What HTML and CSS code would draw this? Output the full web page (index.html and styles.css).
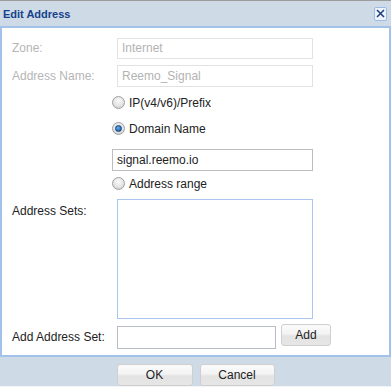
FILE: index.html
```html
<!DOCTYPE html>
<html>
<head>
    <link rel="stylesheet" href="styles.css">
</head>
<body>
    <div class="dialog">
        <!-- title -->
        <div class="title-bar">
            <span class="title">Edit Address</span>
            <span class="close-btn">
                <svg width="9" height="9" viewBox="0 0 9 9">
                    <path d="M1 1 L8 8 M8 1 L1 8" stroke="#1e3c7a" stroke-width="1.5" fill="none"/>
                </svg>
            </span>
        </div>

        <!-- form -->
        <div class="content">
            <div class="form-row">
                <label class="field-label disabled">Zone:</label>
                <input class="text-input" type="text" value="Internet" disabled>
            </div>
            <div class="form-row row-name">
                <label class="field-label disabled">Address Name:</label>
                <input class="text-input tall" type="text" value="Reemo_Signal" disabled>
            </div>

            <label class="radio-row row-ip">
                <input type="radio" name="kind">
                <span>IP(v4/v6)/Prefix</span>
            </label>
            <label class="radio-row row-domain">
                <input type="radio" name="kind" checked>
                <span>Domain Name</span>
            </label>
            <div class="domain-box">
                <input class="text-input active" type="text" value="signal.reemo.io">
            </div>
            <label class="radio-row row-range">
                <input type="radio" name="kind">
                <span>Address range</span>
            </label>

            <div class="form-row row-sets">
                <label class="field-label top">Address Sets:</label>
                <textarea class="sets-list"></textarea>
            </div>
            <div class="form-row row-add">
                <label class="field-label">Add Address Set:</label>
                <input class="text-input add-input" type="text">
                <button class="btn add-btn">Add</button>
            </div>
        </div>

        <!-- buttons -->
        <div class="footer">
            <button class="btn ok-btn">OK</button>
            <button class="btn cancel-btn">Cancel</button>
        </div>
    </div>
</body>
</html>
```

FILE: styles.css
```css
body {
    margin: 0;
    width: 391px;
    height: 387px;
    overflow: hidden;
    font-family: "Liberation Sans", Arial, sans-serif;
    font-size: 12px;
    color: #222;
    background: #fff;
}

.dialog {
    height: 387px;
    box-sizing: border-box;
    border-top: 1px solid #9c9c9c;
    background: #cfdae7;
    display: flex;
    flex-direction: column;
}

.title-bar {
    height: 25px;
    display: flex;
    align-items: center;
    justify-content: space-between;
    padding: 0 4px 0 3px;
}

.title {
    font-size: 11px;
    font-weight: bold;
    color: #15428b;
    margin-top: 1px;
}

.close-btn {
    width: 11px;
    height: 12px;
    border: 1px solid #99bbe8;
    border-radius: 2px;
    background: #eef3fa;
    display: flex;
    align-items: center;
    justify-content: center;
    margin-top: 1px;
}

.content {
    height: 322px;
    background: #fff;
    border: 2px solid #a3c2ea;
    padding: 10px 0 0 10px;
}

.form-row {
    display: flex;
    align-items: center;
}

.field-label {
    width: 105px;
    flex-shrink: 0;
}

.field-label.disabled {
    color: #b5b5b5;
}

.field-label.top {
    align-self: flex-start;
    padding-top: 5px;
}

.text-input {
    box-sizing: border-box;
    width: 196px;
    height: 21px;
    margin: 0;
    padding: 0 4px;
    border: 1px solid #c4c4c4;
    background: #fff;
    font-family: "Liberation Sans", Arial, sans-serif;
    font-size: 12px;
    color: #222;
    outline: none;
}

.text-input:disabled {
    border-color: #e2e2e2;
    color: #b3b3b3;
}

.text-input.tall {
    height: 22px;
}

.row-name {
    margin-top: 6px;
}

.radio-row {
    display: flex;
    align-items: center;
    gap: 4px;
    height: 16px;
    margin-left: 100px;
}

.radio-row input {
    appearance: none;
    -webkit-appearance: none;
    width: 13px;
    height: 13px;
    margin: 0;
    border: 1px solid #a0a0a0;
    border-radius: 50%;
    background: radial-gradient(circle at 50% 35%, #fafafa 0, #e4e4e4 55%, #c4c4c4 100%);
    box-sizing: border-box;
    position: relative;
}

.radio-row input:checked::after {
    content: "";
    position: absolute;
    left: 2px;
    top: 2px;
    width: 5px;
    height: 5px;
    border-radius: 50%;
    border: 1px solid #173e6e;
    background: radial-gradient(circle at 40% 35%, #6fb0ee 0, #1f6cc0 70%);
}

.row-ip {
    margin-top: 8px;
}

.row-domain {
    margin-top: 10px;
}

.domain-box {
    margin: 12px 0 0 100px;
}

.domain-box .text-input {
    width: 201px;
    height: 22px;
    border-color: #bdbdbd;
}

.row-range {
    margin-top: 5px;
}

.row-sets {
    margin-top: 7px;
}

.sets-list {
    box-sizing: border-box;
    width: 196px;
    height: 120px;
    margin: 0;
    border: 1px solid #a9c5f0;
    resize: none;
    outline: none;
}

.row-add {
    margin-top: 7px;
}

.add-input {
    width: 159px;
    height: 23px;
    border-color: #b9bdc6;
}

.btn {
    box-sizing: border-box;
    height: 22px;
    margin: 0;
    padding: 0;
    border: 1px solid #cfcfcf;
    border-radius: 3px;
    background: linear-gradient(#fbfbfb 0, #f3f3f3 45%, #e3e3e3 55%, #e6e6e6 100%);
    font-family: "Liberation Sans", Arial, sans-serif;
    font-size: 12px;
    color: #222;
}

.add-btn {
    width: 50px;
    margin-left: 5px;
    align-self: flex-start;
    margin-top: -2px;
}

.footer {
    flex: 1;
    display: flex;
    justify-content: center;
    gap: 7px;
    padding-top: 7px;
    border-bottom: 1px solid #f2f4f8;
}

.ok-btn {
    width: 76px;
}

.cancel-btn {
    width: 75px;
}
```
